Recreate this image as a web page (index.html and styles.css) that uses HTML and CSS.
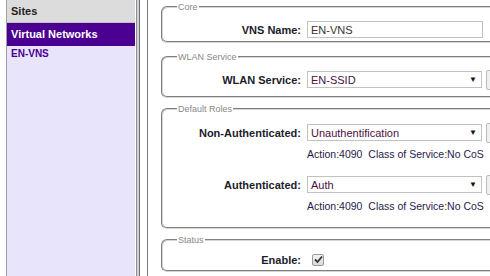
FILE: index.html
```html
<!DOCTYPE html>
<html lang="en">
<head>
    <meta charset="UTF-8">
    <title>VNS - EN-VNS</title>
    <link rel="stylesheet" href="styles.css">
</head>
<body>
    <div class="page">
        <div class="sidebar">
            <div class="sidebar-title">Sites</div>
            <div class="nav-section">Virtual Networks</div>
            <a href="#" class="nav-item">EN-VNS</a>
        </div>

        <div class="splitter"></div>

        <div class="main">
            <fieldset class="group group-core">
                <legend>Core</legend>
                <div class="row">
                    <label class="field-label">VNS Name:</label>
                    <input type="text" class="text-input" value="EN-VNS">
                </div>
            </fieldset>

            <fieldset class="group group-wlan">
                <legend>WLAN Service</legend>
                <div class="row">
                    <label class="field-label">WLAN Service:</label>
                    <div class="select"><span>EN-SSID</span><span class="arrow">&#9660;</span></div>
                    <button class="side-button"></button>
                </div>
            </fieldset>

            <fieldset class="group group-roles">
                <legend>Default Roles</legend>
                <div class="row">
                    <label class="field-label">Non-Authenticated:</label>
                    <div class="select"><span>Unauthentification</span><span class="arrow">&#9660;</span></div>
                    <button class="side-button"></button>
                </div>
                <div class="role-info">Action:4090&nbsp;&nbsp;Class of Service:No CoS</div>
                <div class="row">
                    <label class="field-label">Authenticated:</label>
                    <div class="select"><span>Auth</span><span class="arrow">&#9660;</span></div>
                    <button class="side-button"></button>
                </div>
                <div class="role-info">Action:4090&nbsp;&nbsp;Class of Service:No CoS</div>
            </fieldset>

            <fieldset class="group group-status">
                <legend>Status</legend>
                <div class="row">
                    <label class="field-label">Enable:</label>
                    <span class="checkbox">
                        <svg width="9" height="9" viewBox="0 0 9 9"><path d="M1 4.5 L3.5 7 L8 1.5" fill="none" stroke="#333" stroke-width="1.8"/></svg>
                    </span>
                </div>
            </fieldset>
        </div>
    </div>
</body>
</html>
```

FILE: styles.css
```css
body {
    margin: 0;
    font-family: "Liberation Sans", Arial, sans-serif;
    font-size: 11px;
    background-color: white;
    overflow: hidden;
}

.page {
    display: flex;
    height: 276px;
}

/* left navigation */
.sidebar {
    width: 128px;
    margin-left: 6px;
    border-left: 1px solid #a0a0a0;
    background-color: #e8e4fc;
    display: flex;
    flex-direction: column;
}

.sidebar-title {
    height: 22px;
    line-height: 22px;
    padding-left: 4px;
    background-color: #dcdcdc;
    border-bottom: 1px solid #c4c4c4;
    font-weight: bold;
    color: #222;
}

.nav-section {
    height: 23px;
    line-height: 23px;
    padding-left: 4px;
    background-color: #4b0091;
    color: white;
    font-weight: bold;
}

.nav-item {
    padding: 2px 4px;
    font-size: 10px;
    font-weight: bold;
    color: #4b0091;
    text-decoration: none;
}

.splitter {
    width: 2px;
    margin-left: 1px;
    border-left: 1px solid #8c8c8c;
    border-right: 1px solid #6e6e6e;
    background-color: #d0d0d4;
}

/* form area */
.main {
    flex: 1;
    min-width: 0;
    margin-left: 7px;
    border-left: 1px solid #777;
    padding: 1.5px 0 0 13px;
    overflow: hidden;
}

.group {
    width: 380px;
    margin: 0;
    padding: 7px 8px 0 8px;
    border: 2px groove #d4d4d4;
    border-radius: 6px;
}

.group legend {
    margin-left: 6px;
    padding: 0 1px;
    font-size: 9px;
    line-height: 11px;
    color: #888;
}

.group-core {
    padding-bottom: 1px;
    margin-bottom: 9px;
}

.group-wlan {
    padding-bottom: 6px;
    margin-bottom: 6px;
}

.group-roles {
    padding-top: 8px;
    padding-bottom: 12px;
    margin-bottom: 6px;
}

.group-status {
    padding-top: 4px;
}

.row {
    display: flex;
    align-items: center;
    height: 20px;
}

.field-label {
    width: 130px;
    margin-right: 6px;
    text-align: right;
    font-weight: bold;
    color: #1c1c2c;
}

.text-input {
    width: 168px;
    height: 15px;
    padding: 0 3px;
    border: 1px solid #c2c2c2;
    font-family: "Liberation Sans", Arial, sans-serif;
    font-size: 11px;
    color: #333;
}

.select {
    display: flex;
    align-items: center;
    justify-content: space-between;
    width: 166px;
    height: 15px;
    padding: 0 4px 0 3px;
    border: 1px solid #c2c2c2;
    color: #4a1040;
}

.select .arrow {
    font-size: 8px;
    color: #111;
}

.side-button {
    width: 30px;
    height: 20px;
    margin-left: 4px;
    border: 1px solid #bbb;
    border-radius: 2px;
    background-color: #f0f0f0;
}

.role-info {
    height: 17px;
    margin: 3px 0 12px 136px;
    line-height: 17px;
    font-size: 10.5px;
    color: #2a1a4a;
}

.role-info:last-child {
    margin-bottom: 0;
}

.checkbox {
    display: inline-flex;
    align-items: center;
    justify-content: center;
    width: 10px;
    height: 10px;
    margin-left: 5px;
    border: 1px solid #9a9a9a;
    border-radius: 2px;
    background: linear-gradient(#f4f4f4, #d8d8d8);
}
```
